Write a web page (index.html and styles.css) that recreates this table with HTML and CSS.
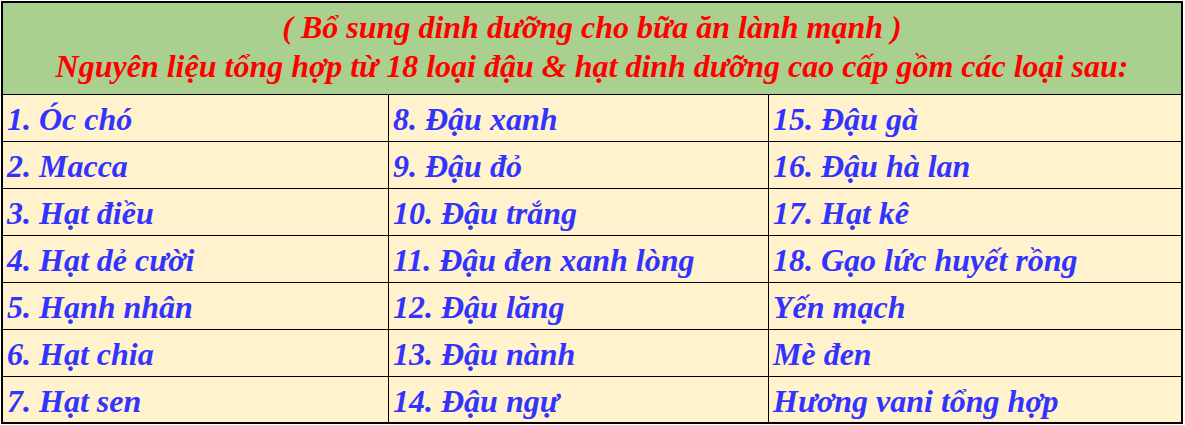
FILE: index.html
```html
<!DOCTYPE html>
<html lang="vi">
<head>
<meta charset="utf-8">
<link rel="stylesheet" href="styles.css">
</head>
<body>
<div class="sheet">
  <div class="head">
    <div class="head-line">( Bổ sung dinh dưỡng cho bữa ăn lành mạnh )</div>
    <div class="head-line">Nguyên liệu tổng hợp từ 18 loại đậu &amp; hạt dinh dưỡng cao cấp gồm các loại sau:</div>
  </div>
  <div class="grid">
    <div class="cell">1. Óc chó</div><div class="cell">8. Đậu xanh</div><div class="cell">15. Đậu gà</div>
    <div class="cell">2. Macca</div><div class="cell">9. Đậu đỏ</div><div class="cell">16. Đậu hà lan</div>
    <div class="cell">3. Hạt điều</div><div class="cell">10. Đậu trắng</div><div class="cell">17. Hạt kê</div>
    <div class="cell">4. Hạt dẻ cười</div><div class="cell">11. Đậu đen xanh lòng</div><div class="cell">18. Gạo lức huyết rồng</div>
    <div class="cell">5. Hạnh nhân</div><div class="cell">12. Đậu lăng</div><div class="cell">Yến mạch</div>
    <div class="cell">6. Hạt chia</div><div class="cell">13. Đậu nành</div><div class="cell">Mè đen</div>
    <div class="cell last">7. Hạt sen</div><div class="cell last">14. Đậu ngự</div><div class="cell last">Hương vani tổng hợp</div>
  </div>
</div>
</body>
</html>
```
FILE: styles.css
```css
html, body {
  margin: 0;
  padding: 0;
  background: #ffffff;
}
.sheet {
  margin: 1px 0 0 1px;
  width: 1182px;
  border: 2px solid #000;
  box-sizing: border-box;
  font-family: "Liberation Serif", "Times New Roman", serif;
  font-weight: bold;
  font-style: italic;
  font-size: 32px;
  background: #fff2cc;
}
.head {
  background: #a9d08e;
  color: #ff0000;
  height: 92px;
  box-sizing: border-box;
  padding-top: 5px;
  border-bottom: 1px solid #000;
  display: flex;
  flex-direction: column;
  align-items: center;
}
.head-line {
  line-height: 39px;
  white-space: nowrap;
}
.grid {
  display: grid;
  grid-template-columns: 386px 380px 1fr;
  grid-template-rows: repeat(6, 47px) 45px;
}
.cell {
  color: #3333ff;
  border-right: 1px solid #000;
  border-bottom: 1px solid #000;
  padding: 0 0 4px 4px;
  line-height: 36px;
  display: flex;
  align-items: flex-end;
  white-space: nowrap;
}
.cell:nth-child(3n) {
  border-right: none;
}
.cell.last {
  border-bottom: none;
  padding-bottom: 3px;
}
```
